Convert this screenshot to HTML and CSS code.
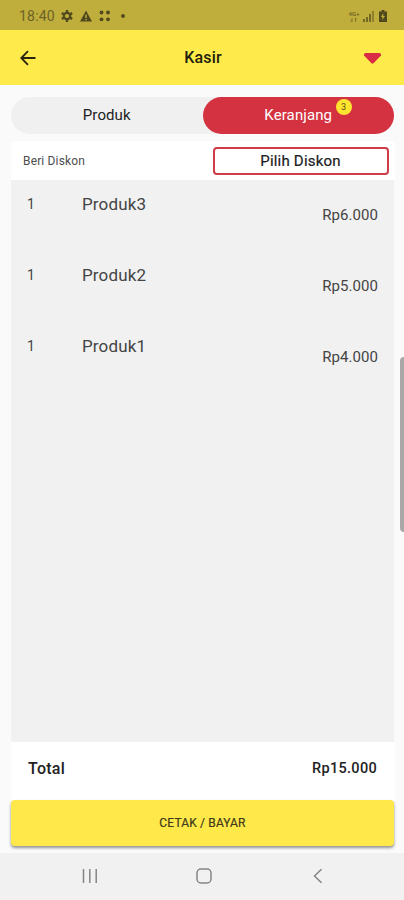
FILE: index.html
```html
<!DOCTYPE html>
<html lang="id">
<head>
<meta charset="utf-8">
<title>Kasir</title>
<link rel="stylesheet" href="styles.css">
</head>
<body>
<div class="screen">
  <div class="status">
    <span class="clock">18:40</span>
    <svg class="gear" width="12" height="12" viewBox="0 0 12 12"><circle cx="6" cy="6" r="3.2" fill="none" stroke="currentColor" stroke-width="2.2"/><path d="M6 0v2.2M6 9.8V12M.8 3l1.9 1.1M9.3 7.9l1.9 1.1M.8 9l1.9-1.1M9.3 4.1l1.9-1.1" stroke="currentColor" stroke-width="2.4"/></svg>
    <svg class="warn" width="12" height="12" viewBox="0 0 12 12"><path fill="currentColor" fill-rule="evenodd" d="M6 .5 12 11.500H0zM5.300 4.500v3.500h1.400v-3.500zM5.300 8.900v1.400h1.400v-1.400z"/></svg>
    <svg class="dots" width="12" height="12" viewBox="0 0 12 12" fill="currentColor"><circle cx="2.500" cy="2.500" r="1.900"/><circle cx="9" cy="2.500" r="1.900"/><circle cx="2.500" cy="9.300" r="1.900"/><circle cx="9" cy="9.300" r="1.900"/></svg>
    <svg class="dot" width="4" height="4" viewBox="0 0 4 4"><circle cx="2" cy="2" r="1.900" fill="currentColor"/></svg>
    <div class="signals">
      <span class="network"><b>4G+</b><svg width="8" height="4" viewBox="0 0 8 4"><path d="M2 0v4M.5 2.500 2 4M5.500 4V0M7 1.500 5.500 0" fill="none" stroke="currentColor" stroke-width=".8"/></svg></span>
      <svg width="12" height="12" viewBox="0 0 12 12" fill="currentColor"><path d="M0 9h2v3H0zM3 7h2v5H3zM6 4h2v8H6z"/><path d="M9 1h2v11H9z" opacity=".65"/></svg>
      <svg class="battery" width="8" height="12" viewBox="0 0 8 12"><path fill="currentColor" fill-rule="evenodd" d="M2.500 0h3v1.500H8V12H0V1.500h2.500zM4.300 3 2 7h1.500l-.3 3L6 6H4.300z"/></svg>
    </div>
  </div>
  <header class="appbar">
    <svg class="back" width="16" height="16" viewBox="0 0 16 16"><path d="M15.500 8H1.500M8 1.200 1.300 8 8 14.800" fill="none" stroke="currentColor" stroke-width="1.800"/></svg>
    <h1>Kasir</h1>
    <svg class="caret" width="17" height="11" viewBox="0 0 17 11"><path d="M1.500 0h14q1.500 0 1.500 1.500v1L9.500 10.300q-1 .9-2 0L0 2.500v-1Q0 0 1.500 0z" fill="#d92c45"/></svg>
  </header>
  <main class="content">
    <nav class="tabs">
      <span class="tab">Produk</span>
      <span class="tab active">Keranjang<span class="badge">3</span></span>
    </nav>
    <section class="discount">
      <span class="discount-label">Beri Diskon</span>
      <span class="discount-button">Pilih Diskon</span>
    </section>
    <section class="cart">
      <div class="item"><span class="qty">1</span><span class="name">Produk3</span><span class="price">Rp6.000</span></div>
      <div class="item"><span class="qty">1</span><span class="name">Produk2</span><span class="price">Rp5.000</span></div>
      <div class="item"><span class="qty">1</span><span class="name">Produk1</span><span class="price">Rp4.000</span></div>
    </section>
    <section class="total"><span class="total-label">Total</span><span class="total-price">Rp15.000</span></section>
    <div class="pay">CETAK / BAYAR</div>
  </main>
  <footer class="navbar">
    <svg width="16" height="16" viewBox="0 0 16 16"><path d="M1.500 1v14M7.800 1v14M14.200 1v14" stroke="currentColor" stroke-width="1.500"/></svg>
    <svg width="16" height="16" viewBox="0 0 16 16"><rect x="1" y="1" width="14" height="14" rx="4" fill="none" stroke="currentColor" stroke-width="1.500"/></svg>
    <svg width="16" height="16" viewBox="0 0 16 16"><path d="M11.500 1.300 4.500 8l7 6.700" fill="none" stroke="currentColor" stroke-width="1.500"/></svg>
  </footer>
  <div class="edge-handle"></div>
</div>
</body>
</html>
```
FILE: styles.css
```css
* { box-sizing: border-box; }
body { margin: 0; font-family: Roboto, sans-serif; color: #222; }
svg { display: block; flex: none; }
.screen { position: relative; width: 404px; height: 900px; display: flex; flex-direction: column; background: #fafafa; overflow: hidden; }
.status { height: 30px; flex: none; display: flex; align-items: center; padding: 2px 17px 0 19px; background: #c0ae3c; color: #51491e; }
.clock { width: 36px; margin-right: 6px; font-size: 14px; line-height: 16px; letter-spacing: .2px; color: #6c6127; white-space: nowrap; }
.warn { margin-left: 7px; }
.dots { margin-left: 7px; }
.dot { margin-left: 10px; }
.signals { margin-left: auto; display: flex; align-items: center; gap: 3px; color: #746827; }
.network { display: flex; flex-direction: column; align-items: center; gap: 1px; width: 12px; font-size: 6px; line-height: 6px; }
.battery { margin-left: 1px; color: #51491e; }
.appbar { height: 55px; flex: none; display: grid; grid-template-columns: 61px 1fr 60px; align-items: center; background: #ffea4b; }
.back { margin-left: 20px; color: #29240f; }
.appbar h1 { margin: 0; padding-left: 1px; text-align: center; font-size: 16px; line-height: 20px; font-weight: 500; letter-spacing: .15px; color: #211d0c; }
.caret { margin-left: 20px; margin-top: 2px; }
.content { flex: 1; display: flex; flex-direction: column; padding: 12px 10px 0 11px; }
.tabs { height: 37px; flex: none; display: flex; border-radius: 19px; background: #f0f0f0; font-size: 15px; line-height: 20px; letter-spacing: .1px; }
.tab { flex: 1; display: flex; align-items: center; justify-content: center; position: relative; padding-bottom: 1px; }
.tab.active { border-radius: 19px; background: #d43240; color: #fff; }
.badge { position: absolute; left: 133px; top: 2px; width: 16px; height: 16px; border-radius: 50%; background: #ffe52f; color: #574d18; font-size: 9px; line-height: 16px; text-align: center; letter-spacing: 0; }
.discount { height: 39px; flex: none; margin-top: 7px; margin-right: -1px; padding: 0 6px 0 12px; display: flex; align-items: center; justify-content: space-between; background: #fff; border-radius: 4px 4px 0 0; }
.discount-label { font-size: 12px; letter-spacing: .15px; color: #4d4d4d; }
.discount-button { width: 176px; height: 28px; border: 2px solid #ce3b49; border-radius: 4px; display: flex; align-items: center; justify-content: center; padding-right: 1px; font-size: 15px; letter-spacing: .2px; color: #202020; -webkit-text-stroke: .2px; }
.cart { height: 562px; flex: none; background: #f1f1f1; }
.item { height: 71px; display: grid; grid-template-columns: 71px 1fr auto; align-items: start; padding: 14px 16px 0 0; color: #444; }
.qty { padding-left: 16px; font-size: 14px; line-height: 20px; }
.name { font-size: 17px; line-height: 20px; letter-spacing: .15px; }
.price { padding-top: 11px; font-size: 15px; line-height: 20px; letter-spacing: .05px; }
.total { height: 59px; flex: none; margin-right: -1px; padding: 0 18px 6px 17px; display: flex; align-items: center; justify-content: space-between; background: #fff; font-weight: 500; }
.total-label { font-size: 16px; letter-spacing: .25px; }
.total-price { font-size: 14.500px; letter-spacing: .3px; }
.pay { height: 46px; flex: none; margin-top: -1px; border-radius: 4px; display: flex; align-items: center; justify-content: center; background: #ffe94a; box-shadow: 0 2px 3px #0000006b; font-size: 12px; letter-spacing: .15px; color: #40391a; -webkit-text-stroke: .2px; position: relative; }
.navbar { height: 47px; flex: none; display: flex; align-items: center; justify-content: center; gap: 98px; padding: 0 0 2px 3px; background: #f1f1f1; color: #858585; }
.edge-handle { position: absolute; right: -4px; top: 357px; width: 8px; height: 175px; border-radius: 4px; background: #a8a8a8; }
```
